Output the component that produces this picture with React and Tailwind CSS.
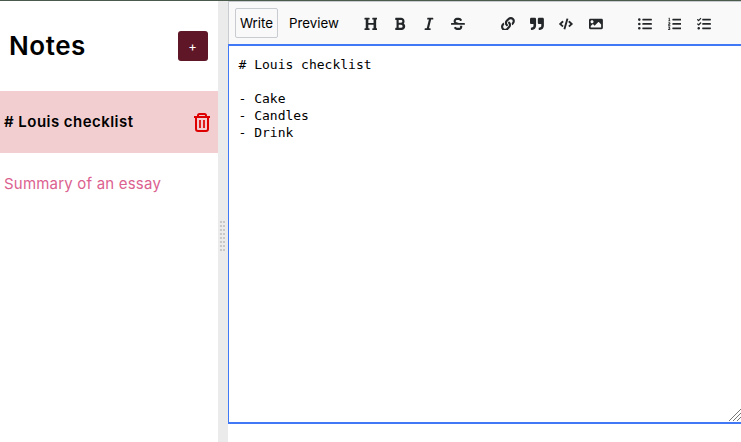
import React from "react";
import {
  FaHeading, FaBold, FaItalic, FaStrikethrough, FaLink, FaQuoteRight,
  FaCode, FaImage, FaListUl, FaListOl, FaTasks,
} from "react-icons/fa";

const groups = [
  [FaHeading, FaBold, FaItalic, FaStrikethrough],
  [FaLink, FaQuoteRight, FaCode, FaImage],
  [FaListUl, FaListOl, FaTasks],
];

const note = "# Louis checklist\n\n- Cake\n- Candles\n- Drink";

function TrashIcon() {
  return (
    <svg width="16" height="19" viewBox="0 0 16 19" fill="none" stroke="#de0000" strokeWidth="2">
      <path d="M4 4V2.5Q4 1 5.5 1H10.5Q12 1 12 2.5V4M0 4H16M2 4V16Q2 18 4 18H12Q14 18 14 16V4" />
      <path d="M6 7V15M10 7V15" strokeWidth="1.7" />
    </svg>
  );
}

function Sidebar() {
  return (
    <aside className="w-[218px] shrink-0 bg-white font-['Inter',sans-serif]">
      <header className="flex h-[90px] items-center justify-between pr-2.5 pl-[9px]">
        <h1 className="text-[26px] leading-8 font-semibold tracking-[0.55px] text-black">Notes</h1>
        <button className="flex size-[30px] items-center justify-center rounded-[3px] bg-[#5f1626] pt-0.5 pr-px text-[13px] text-white">+</button>
      </header>
      <div className="flex h-[62px] items-center justify-between bg-[#f2ced0] pr-2 pl-1">
        <span className="text-[15px] font-semibold tracking-[0.46px] text-black"># Louis checklist</span>
        <TrashIcon />
      </div>
      <div className="flex h-[62px] items-center pl-1">
        <span className="text-[15px] tracking-[0.2px] text-[#dc6190]">Summary of an essay</span>
      </div>
    </aside>
  );
}

function Gutter() {
  return (
    <div className="flex w-[10px] shrink-0 justify-center bg-[#ebebeb] pt-[220px] pr-[3px] pl-[2px]">
      <div className="grid h-[30px] grid-cols-2 gap-x-px gap-y-[2px]">
        {Array.from({ length: 16 }, (_, i) => (
          <i key={i} className="size-[2px] bg-[#c8c8c8]" />
        ))}
      </div>
    </div>
  );
}

function Toolbar() {
  return (
    <div className="flex h-[43px] items-center border-t border-l border-[#c8ccd0] bg-[#f9f9f9] pl-[6px] font-['Inter',sans-serif] text-[13.3px] text-black">
      <button className="h-[30px] w-[43px] rounded-[2px] border border-[#c8ccd0] pt-0.5 text-center">Write</button>
      <button className="ml-[11px] w-[50px] pt-0.5 text-left">Preview</button>
      <div className="ml-[24.6px] flex gap-[35.6px] pt-px">
        {groups.map((icons, g) => (
          <div key={g} className="flex gap-[15.4px]">
            {icons.map((Icon, i) => (
              <Icon key={i} className="size-[13.9px] text-[#242729]" />
            ))}
          </div>
        ))}
      </div>
    </div>
  );
}

function Editor() {
  return (
    <main className="flex min-w-0 flex-1 flex-col bg-white">
      <Toolbar />
      <div className="relative h-[380px] border-y-2 border-l border-[#4178f5] pt-[10px] pl-[9.5px]">
        <pre className="font-['DejaVu_Sans_Mono',monospace] text-[13px] leading-[17px] text-black">{note}</pre>
        <svg className="absolute right-0 bottom-px" width="12" height="13" viewBox="0 0 12 13" stroke="#777" fill="none">
          <path d="M0 13L12 1M4 13L12 5M8 13L12 9" />
        </svg>
      </div>
    </main>
  );
}

export default function App() {
  return (
    <div className="flex h-[442px] w-[741px] overflow-hidden border-t border-[#4a5a4b] bg-white">
      <Sidebar />
      <Gutter />
      <Editor />
    </div>
  );
}
